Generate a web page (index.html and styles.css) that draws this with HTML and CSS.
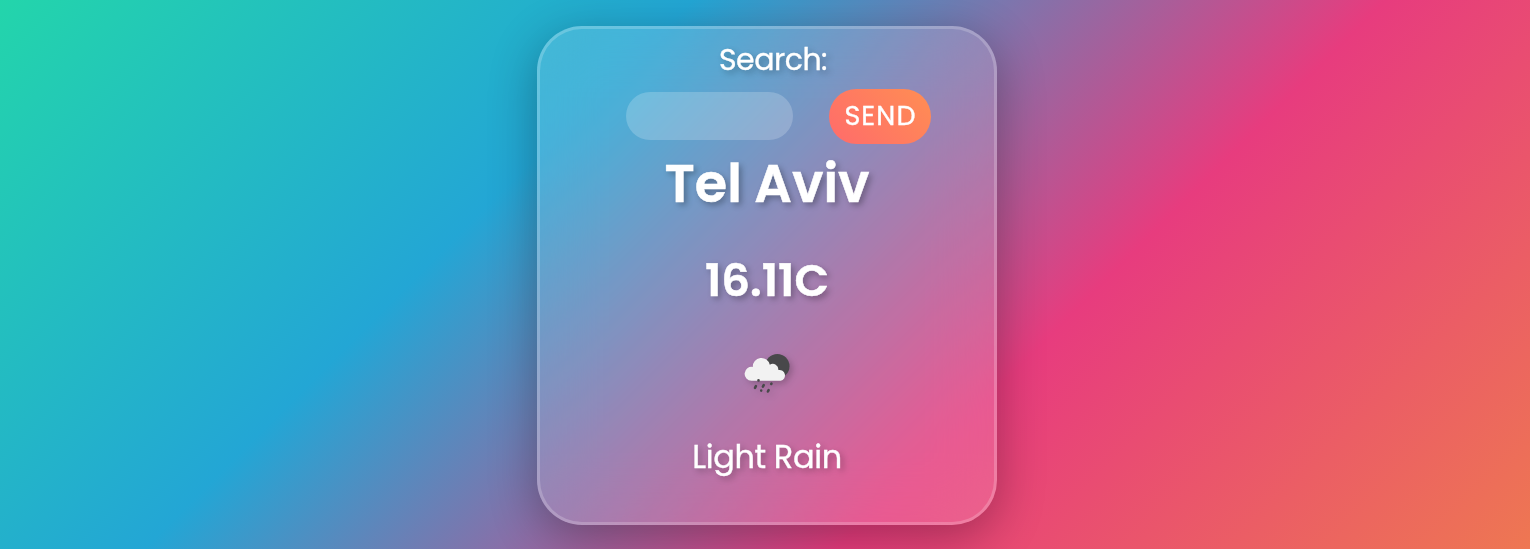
FILE: index.html
```html
<!DOCTYPE html>
<html lang="en">
<head>
<meta charset="utf-8">
<title>Weather</title>
<link rel="stylesheet" href="styles.css">
</head>
<body>
<main class="card">
  <form class="search">
    <label class="search-label" for="city">Search:</label>
    <div class="search-row">
      <input class="search-input" id="city" type="text">
      <button class="search-button" type="button">SEND</button>
    </div>
  </form>
  <h1 class="city">Tel Aviv</h1>
  <h2 class="temperature">16.11C</h2>
  <svg class="icon" viewBox="0 0 64 56" width="64" height="56" aria-label="Light rain">
    <circle cx="42.3" cy="21.2" r="12.2" fill="#48484a"/>
    <path d="M16.5 35.8a7 7 0 1 1 1.3-13.9 8.6 8.6 0 0 1 17-2.2 5.6 5.6 0 0 1 8.5 5.4 5.4 5.4 0 1 1 2.4 10.7Z" fill="#f2f2f2"/>
    <g fill="none" stroke="#48484a" stroke-width="2.6" stroke-linecap="round">
      <path d="M23.5 35.3v.1M28.7 40.2l-.8 1.4M36.4 38.7l-.2.3M20.9 41.2l-.9 1.7M26.2 45.5v.1M33.6 45.2l-.7 1.3"/>
    </g>
  </svg>
  <p class="condition">Light Rain</p>
</main>
</body>
</html>
```
FILE: styles.css
```css
* { box-sizing: border-box; }
body {
  margin: 0;
  height: 549px;
  padding: 26px 0 0 4px;
  display: flex;
  justify-content: center;
  align-items: flex-start;
  overflow: hidden;
  color: #fff;
  font-family: Poppins, Inter, "Open Sans", sans-serif;
  background: linear-gradient(-45deg, #ee7752, #e73c7e, #23a6d5, #23d5ab);
}
.card {
  width: 460px;
  height: 499px;
  display: flex;
  flex-direction: column;
  align-items: center;
  border: 3px solid rgba(255, 255, 255, .2);
  border-radius: 45px;
  background: rgba(255, 255, 255, .15);
  backdrop-filter: blur(30px);
  box-shadow: 0 12px 48px rgba(0, 0, 0, .3);
  text-shadow: 3px 3px 6px rgba(0, 0, 0, .3);
}
.search { width: 100%; height: 119px; padding-top: 8px; }
.search-label {
  display: block;
  height: 44px;
  padding-left: 12px;
  line-height: 46px;
  text-align: center;
  font-size: 30px;
  letter-spacing: -.5px;
  -webkit-text-stroke: .35px #fff;
}
.search-row { display: flex; align-items: center; gap: 36px; height: 70px; padding-left: 86px; }
.search-input {
  width: 167px;
  height: 48px;
  margin: 0;
  border: 0;
  border-radius: 24px;
  background: rgba(255, 255, 255, .2);
}
.search-button {
  width: 102px;
  height: 55px;
  margin: 0;
  padding: 0 0 1px 1px;
  border: 0;
  border-radius: 27.5px;
  color: #fff;
  font: 400 27px/54px Poppins, Inter, sans-serif;
  letter-spacing: 1.1px;
  -webkit-text-stroke: .35px #fff;
  background: linear-gradient(45deg, #ff6b6b, #ff8e53);
}
.city { margin: 0; height: 80px; font-size: 52.5px; line-height: 71px; font-weight: 600; -webkit-text-stroke: .5px #fff; }
.temperature { margin: 0; height: 104px; font-size: 45px; line-height: 105px; font-weight: 600; -webkit-text-stroke: .5px #fff; }
.icon { display: block; margin-top: 13px; filter: drop-shadow(3px 3px 3px rgba(0, 0, 0, .2)); }
.condition { margin: 26px 0 0; font-size: 32px; line-height: 60px; letter-spacing: -.4px; -webkit-text-stroke: .35px #fff; }
```
